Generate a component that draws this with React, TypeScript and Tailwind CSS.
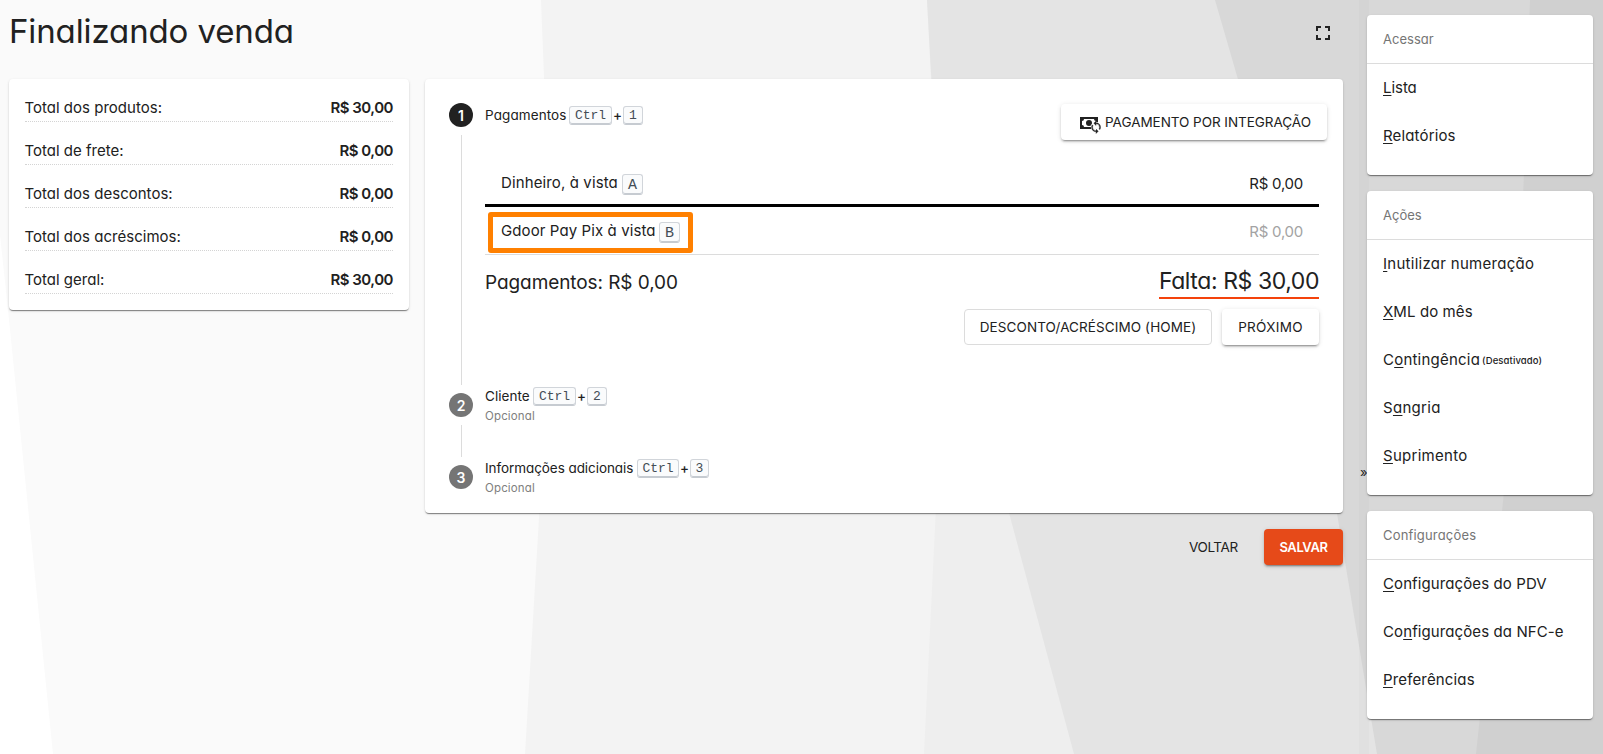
import type { ReactNode } from "react";

const CARD = "rounded bg-white shadow-[0_2px_1px_-1px_rgba(0,0,0,0.3),0_1px_1px_0_rgba(0,0,0,0.2),0_1px_3px_0_rgba(0,0,0,0.12)]";
const RAISED = "shadow-[0_3px_1px_-2px_rgba(0,0,0,0.22),0_2px_2px_0_rgba(0,0,0,0.16),0_1px_5px_0_rgba(0,0,0,0.12)]";

function Backdrop() {
  return (
    <svg className="absolute inset-0 h-full w-full" viewBox="0 0 1603 754" preserveAspectRatio="none" aria-hidden="true">
      <rect width="1603" height="754" fill="#fafafa" />
      <path d="M0 235L8 310L53 754H0Z" fill="#ffffff" />
      <path d="M541 0L552.4 292L525 754H1603V0Z" fill="#f3f3f3" />
      <path d="M927 0L944 342L924 754H1603V0Z" fill="#eeeeee" />
      <path d="M927 0L942 272L1009 513L1074 754H1603V0Z" fill="#e4e4e4" />
      <path d="M1215 0L1301 297L1377 754H1603V0Z" fill="#d8d8d8" />
      <path d="M1530 0L1517 371L1476 754H1603V0Z" fill="#d0d0d0" />
      <rect x="1359" width="10" height="754" fill="#000000" fillOpacity="0.015" />
    </svg>
  );
}

function Kbd({ children, className = "" }: { children: ReactNode; className?: string }) {
  return (
    <kbd className={`flex items-center justify-center rounded-[3px] border border-[#d1d5da] border-b-[#c6cbd1] bg-[#fafbfc] font-['Liberation_Mono',monospace] leading-none font-normal tracking-normal text-[#444d56] shadow-[inset_0_-1px_0_#c6cbd1] ${className}`}>
      {children}
    </kbd>
  );
}

const totals = [
  ["Total dos produtos:", "R$ 30,00"],
  ["Total de frete:", "R$ 0,00"],
  ["Total dos descontos:", "R$ 0,00"],
  ["Total dos acréscimos:", "R$ 0,00"],
  ["Total geral:", "R$ 30,00"],
];

function Totals() {
  return (
    <section className={`h-[231px] w-[400px] shrink-0 px-4 ${CARD}`}>
      {totals.map(([label, value]) => (
        <div key={label} className="flex h-[43px] items-end justify-between border-b border-dotted border-[#d4d4d4] pb-px text-[15px] leading-6">
          <span className="-ml-[0.6px] tracking-[0.02px]">{label}</span>
          <span className="font-semibold tracking-[-0.5px]">{value}</span>
        </div>
      ))}
    </section>
  );
}

function StepNumber({ n, active = false }: { n: number; active?: boolean }) {
  return (
    <span className={`flex h-6 w-6 shrink-0 items-center justify-center rounded-full pt-px text-[14px] leading-none font-semibold text-white ${active ? "bg-[#212121]" : "bg-[#757575]"}`}>
      {n}
    </span>
  );
}

function OptionalStep({ n, title, ctrl, num, tracking }: { n: number; title: string; ctrl: string; num: string; tracking: string }) {
  return (
    <div className="flex h-10 items-center">
      <StepNumber n={n} />
      <div className="mt-[3px] ml-3">
        <div className="flex h-[19px] items-center text-[13.5px]">
          <span className={tracking}>{title}</span>
          <Kbd className={`h-[19px] text-[13px] ${ctrl}`}>Ctrl</Kbd>
          <span className="w-[11px] text-center font-medium">+</span>
          <Kbd className={`h-[19px] text-[13px] ${num}`}>{n}</Kbd>
        </div>
        <div className="h-5 text-[11.5px] leading-5 tracking-[0.15px] text-[#808080]">Opcional</div>
      </div>
    </div>
  );
}

function CashSyncIcon() {
  return (
    <svg className="mr-1 h-6 w-6 shrink-0" viewBox="0 0 24 24" fill="#212121">
      <path d="M3,6H21V18H3V6M12,9A3,3 0 0,1 15,12A3,3 0 0,1 12,15A3,3 0 0,1 9,12A3,3 0 0,1 12,9M7,8A2,2 0 0,1 5,10V14A2,2 0 0,1 7,16H17A2,2 0 0,1 19,14V10A2,2 0 0,1 17,8H7Z" />
      <circle cx="19" cy="16" r="5.2" fill="#ffffff" />
      <g transform="translate(12.2 9.4) scale(0.57)">
        <path stroke="#212121" strokeWidth="0.6" d="M12,18A6,6 0 0,1 6,12C6,11 6.25,10.03 6.7,9.2L5.24,7.74C4.46,8.97 4,10.43 4,12A8,8 0 0,0 12,20V23L16,19L12,15M12,4V1L8,5L12,9V6A6,6 0 0,1 18,12C18,13 17.75,13.97 17.3,14.8L18.76,16.26C19.54,15.03 20,13.57 20,12A8,8 0 0,0 12,4Z" />
      </g>
    </svg>
  );
}

function Checkout() {
  return (
    <section className={`h-[434px] pt-6 pl-6 ${CARD}`}>
      <div className="flex h-[282px]">
        <div className="flex w-6 shrink-0 flex-col items-center">
          <StepNumber n={1} active />
          <div className="mt-2 ml-px h-[250px] w-px bg-[#dcdcdc]" />
        </div>
        <div className="ml-3 w-[834px]">
          <div className="flex h-[53px] justify-between">
            <div className="mt-[3px] flex h-[19px] items-center text-[13.5px]">
              <span className="w-[84px] tracking-[0.1px]">Pagamentos</span>
              <Kbd className="h-[19px] w-[43px] text-[13px]">Ctrl</Kbd>
              <span className="w-[11px] text-center font-medium">+</span>
              <Kbd className="h-[19px] w-5 text-[13px]">1</Kbd>
            </div>
            <button className={`-mr-2 mt-px flex h-9 w-[266px] items-center rounded bg-white pt-px pl-4 text-[13.5px] tracking-[-0.04px] whitespace-nowrap ${RAISED}`}>
              <CashSyncIcon />
              <span>PAGAMENTO POR INTEGRAÇÃO</span>
            </button>
          </div>
          <div className="flex h-[51px] items-center justify-between border-b-[3px] border-black px-4 pt-2 text-[15px]">
            <div className="mt-px flex items-center">
              <span className="-mt-[2px] w-[121px] tracking-[0.12px]">Dinheiro, à vista</span>
              <Kbd className="h-[21px] w-[21px] pt-px text-[15px]">A</Kbd>
            </div>
            <span className="tracking-[-0.25px]">R$ 0,00</span>
          </div>
          <div className="flex h-12 items-start justify-between border-b border-[#dcdcdc] pt-[5px] pr-4 pl-[3px] text-[15px]">
            <div className="flex h-[41px] w-[205px] items-center rounded-[3px] border-[5px] border-[#ff8000] pl-2">
              <span className="-mt-[3px] w-[158px] tracking-[0.1px]">Gdoor Pay Pix à vista</span>
              <Kbd className="h-[21px] w-[21px] pt-px text-[15px]">B</Kbd>
            </div>
            <span className="mt-2 leading-6 tracking-[-0.25px] text-[#a3a3a3]">R$ 0,00</span>
          </div>
          <div className="flex h-[54px] items-start justify-between">
            <span className="mt-[14px] text-[19px] leading-7 tracking-[-0.08px]">Pagamentos: R$ 0,00</span>
            <span className="mt-[10px] h-[34px] border-b-2 border-[#f4430c] text-[23px] leading-[33px] tracking-[-0.42px]">Falta: R$ 30,00</span>
          </div>
          <div className="flex h-9 justify-end gap-[10px] text-[13.5px]">
            <button className="flex w-[248px] items-center justify-center rounded border border-[#dcdcdc] pt-px tracking-[0.1px] whitespace-nowrap">DESCONTO/ACRÉSCIMO (HOME)</button>
            <button className={`flex w-[97px] items-center justify-center rounded bg-white pt-px tracking-[0.3px] ${RAISED}`}>PRÓXIMO</button>
          </div>
        </div>
      </div>
      <OptionalStep n={2} title="Cliente" tracking="w-[48px] tracking-[0.05px]" ctrl="w-[43px]" num="w-5" />
      <div className="ml-3 h-8 w-px bg-[#dcdcdc]" />
      <OptionalStep n={3} title="Informações adicionais" tracking="w-[152px] tracking-[-0.07px]" ctrl="w-[42px]" num="w-[19px]" />
    </section>
  );
}

type Item = { before?: string; key: string; after: string; note?: string; tracking: string };

const menus: { title: string; tracking: string; items: Item[] }[] = [
  {
    title: "Acessar",
    tracking: "tracking-[0.03px]",
    items: [
      { key: "L", after: "ista", tracking: "tracking-[-0.05px]" },
      { key: "R", after: "elatórios", tracking: "tracking-[0.15px]" },
    ],
  },
  {
    title: "Ações",
    tracking: "tracking-[0px]",
    items: [
      { key: "I", after: "nutilizar numeração", tracking: "tracking-[0.28px]" },
      { key: "X", after: "ML do mês", tracking: "tracking-[0.1px]" },
      { before: "C", key: "o", after: "ntingência", note: "(Desativado)", tracking: "tracking-[0.22px]" },
      { before: "S", key: "a", after: "ngria", tracking: "tracking-[0.3px]" },
      { key: "S", after: "uprimento", tracking: "tracking-[0.28px]" },
    ],
  },
  {
    title: "Configurações",
    tracking: "tracking-[0.18px]",
    items: [
      { key: "C", after: "onfigurações do PDV", tracking: "tracking-[0.1px]" },
      { before: "Co", key: "n", after: "figurações da NFC-e", tracking: "tracking-[0.1px]" },
      { key: "P", after: "referências", tracking: "tracking-[0.15px]" },
    ],
  },
];

function Sidebar() {
  return (
    <aside className="flex h-full w-[244px] shrink-0 items-start pt-[15px]">
      <span className="mt-[449px] ml-px flex h-4 w-[7px] items-center text-[13px] leading-none">»</span>
      <div className="flex w-[226px] flex-col gap-4">
        {menus.map((m) => (
          <nav key={m.title} className={`pb-[15px] ${CARD}`}>
            <h2 className={`flex h-[49px] items-center border-b border-[#dcdcdc] px-4 pt-[2px] text-[13px] text-[#757575] ${m.tracking}`}>{m.title}</h2>
            {m.items.map((it) => (
              <a key={it.key + it.after} className={`flex h-12 items-center px-4 text-[15px] whitespace-nowrap ${it.tracking}`}>
                <span>
                  {it.before}
                  <span className="underline decoration-1 underline-offset-2">{it.key}</span>
                  {it.after}
                </span>
                {it.note && <span className="mt-[2px] ml-[2px] text-[9.5px] font-medium tracking-[0.1px]">{it.note}</span>}
              </a>
            ))}
          </nav>
        ))}
      </div>
    </aside>
  );
}

export default function App() {
  return (
    <div className="relative h-[754px] w-[1603px] overflow-hidden font-['Inter',sans-serif] text-[#212121] [font-feature-settings:'cv11']">
      <Backdrop />
      <div className="relative flex h-full justify-between pl-[9px]">
        <main className="w-[1334px]">
          <header className="flex h-[79px] items-start justify-between">
            <h1 className="mt-[11px] text-[33px] leading-10 tracking-[-0.12px]">Finalizando venda</h1>
            <button className="mt-[21px] mr-2">
              <svg className="h-6 w-6" viewBox="0 0 24 24" fill="#212121">
                <path d="M7 14H5v5h5v-2H7v-3zm-2-4h2V7h3V5H5v5zm12 7h-3v2h5v-5h-2v3zM14 5v2h3v3h2V5h-5z" />
              </svg>
            </button>
          </header>
          <div className="flex items-start gap-4">
            <Totals />
            <div className="w-[918px]">
              <Checkout />
              <div className="mt-4 flex h-9 justify-end gap-[10px] text-[13px]">
                <button className="w-[65px] pt-px text-left text-[13.5px] tracking-[-0.4px]">VOLTAR</button>
                <button className={`w-[79px] rounded bg-[#e64a19] pt-px font-semibold tracking-[-0.4px] text-white ${RAISED}`}>SALVAR</button>
              </div>
            </div>
          </div>
        </main>
        <Sidebar />
      </div>
    </div>
  );
}
